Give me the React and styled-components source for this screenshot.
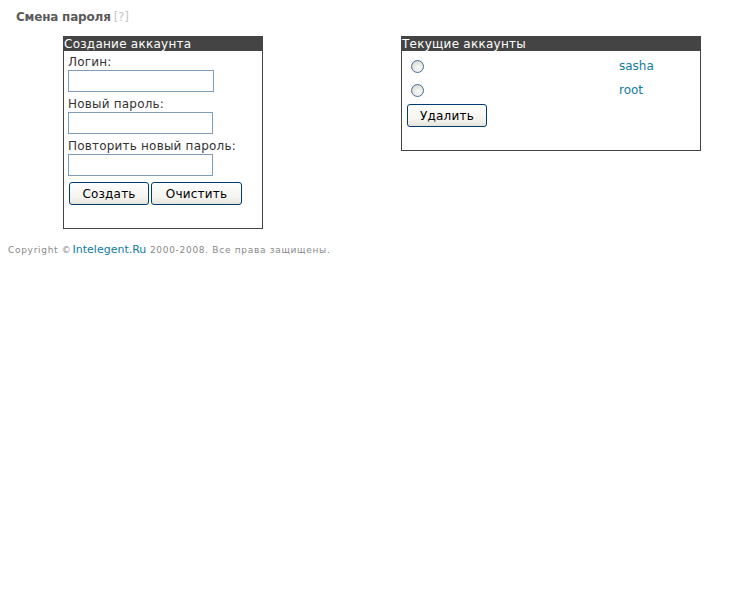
import React from "react";
import styled, { createGlobalStyle } from "styled-components";

const GlobalStyle = createGlobalStyle`
  html, body {
    margin: 0;
    padding: 0;
    background: #fff;
  }
  body {
    padding: 8px;
    font-family: "DejaVu Sans", Verdana, sans-serif;
    font-size: 12px;
    color: #333;
  }
`;

const colors = {
  dark: "#444444",
  link: "#0f7c9c",
  inputBorder: "#7f9db9",
  buttonBorder: "#003c74",
};

const PageTitle = styled.h1`
  margin: 0;
  padding: 2px 0 0 8px;
  height: 18px;
  font-size: 12px;
  font-weight: bold;
  color: #5a5a5a;
  line-height: 14px;
  letter-spacing: -0.2px;
`;

const Help = styled.span`
  font-weight: normal;
  color: #c8c8c8;
  margin-left: -1px;
`;

const Panels = styled.div`
  display: flex;
  align-items: flex-start;
  padding-top: 8px;
`;

const Panel = styled.div`
  box-sizing: border-box;
  width: ${({ width }) => width}px;
  min-height: ${({ height }) => height}px;
  margin-left: ${({ offset }) => offset}px;
  border: 1px solid ${colors.dark};
`;

const PanelHeader = styled.div`
  background: ${colors.dark};
  color: #fff;
  font-size: 12px;
  line-height: 14px;
  height: 14px;
  letter-spacing: 0.25px;
  white-space: nowrap;
`;

const PanelBody = styled.div`
  padding: ${({ pad }) => pad};
`;

const Label = styled.div`
  line-height: 14px;
  letter-spacing: 0.2px;
  margin-top: ${({ first }) => (first ? 4 : 5)}px;
  margin-bottom: 1px;
`;

const Input = styled.input`
  box-sizing: border-box;
  display: block;
  width: ${({ w }) => w}px;
  height: 22px;
  margin: 0;
  padding: 1px 3px;
  border: 1px solid ${colors.inputBorder};
  font: inherit;
  background: #fff;
`;

const ButtonRow = styled.div`
  display: flex;
  gap: 2px;
  margin-top: ${({ top }) => top}px;
  padding-left: ${({ left }) => left}px;
`;

const Button = styled.button`
  box-sizing: border-box;
  width: ${({ w }) => w}px;
  height: 23px;
  margin: 0;
  padding: 0;
  border: 1px solid ${colors.buttonBorder};
  border-radius: 3px;
  background: linear-gradient(#fefefe, #f4f3ee 70%, #e6e5dc);
  font-family: inherit;
  font-size: 12px;
  letter-spacing: 0.2px;
  color: #000;
`;

const AccountList = styled.div`
  padding-top: 3px;
`;

const AccountRow = styled.div`
  display: flex;
  align-items: center;
  height: 24px;
`;

const Radio = styled.span`
  box-sizing: border-box;
  width: 13px;
  height: 13px;
  margin-left: 9px;
  border-radius: 50%;
  border: 1px solid #4a6d95;
  background: radial-gradient(circle at 60% 65%, #fff, #dcdcd6 70%, #c8c8c0);
`;

const UserName = styled.span`
  margin-left: auto;
  width: 81px;
  color: ${colors.link};
`;

const Footer = styled.div`
  margin-top: 14px;
  font-size: 9px;
  letter-spacing: 0.7px;
  color: #888;
`;

const FooterLink = styled.a`
  font-size: 11px;
  letter-spacing: 0;
  margin-left: 1px;
  color: ${colors.link};
  text-decoration: none;
`;

const accounts = ["sasha", "root"];

export default function App() {
  return (
    <>
      <GlobalStyle />
      <PageTitle>
        Смена пароля <Help>[?]</Help>
      </PageTitle>
      <Panels>
        <Panel width={200} height={193} offset={55}>
          <PanelHeader>Создание аккаунта</PanelHeader>
          <PanelBody pad="0 4px">
            <Label first>Логин:</Label>
            <Input w={146} />
            <Label>Новый пароль:</Label>
            <Input w={145} type="password" />
            <Label>Повторить новый пароль:</Label>
            <Input w={145} type="password" />
            <ButtonRow top={6} left={1}>
              <Button w={80}>Создать</Button>
              <Button w={91}>Очистить</Button>
            </ButtonRow>
          </PanelBody>
        </Panel>
        <Panel width={300} height={115} offset={138}>
          <PanelHeader>Текущие аккаунты</PanelHeader>
          <AccountList>
            {accounts.map((name) => (
              <AccountRow key={name}>
                <Radio />
                <UserName>{name}</UserName>
              </AccountRow>
            ))}
          </AccountList>
          <ButtonRow top={2} left={5}>
            <Button w={80}>Удалить</Button>
          </ButtonRow>
        </Panel>
      </Panels>
      <Footer>
        Copyright ©<FooterLink href="#">Intelegent.Ru</FooterLink> 2000-2008. Все права защищены.
      </Footer>
    </>
  );
}
